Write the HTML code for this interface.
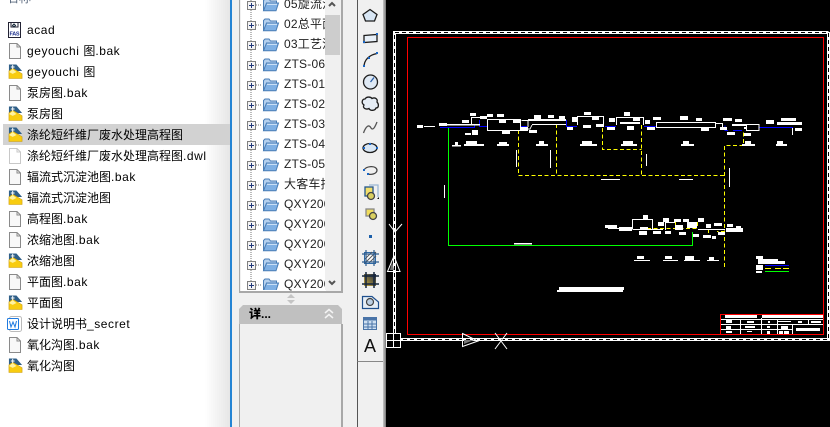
<!DOCTYPE html>
<html><head><meta charset="utf-8"><style>
html,body{margin:0;padding:0;width:830px;height:427px;overflow:hidden;background:#f0f0f0}
body{position:relative;font:12px/21px "Liberation Sans","Noto Sans CJK SC",sans-serif;color:#000}
div{position:absolute}
#list{left:0;top:0;width:230px;height:427px;background:linear-gradient(90deg,#fff 0,#fff 205px,#e6e6e6 230px)}
.r span{letter-spacing:.55px}
.r{left:27px;white-space:nowrap;height:21px}
#sel{left:3px;top:124px;width:227px;height:21px;background:#d2d2d2}
#tree{left:239px;top:-2px;width:101px;height:293px;background:#f0f0f0;border:1px solid #a8a8a8;border-top:0;border-width:0 2px 2px 1px;overflow:hidden}
#tw{left:1px;top:-1px;width:85px;height:294px;background:#fff;overflow:hidden}
.t{left:43px;white-space:nowrap;line-height:20px;height:20px;color:#222;font-size:12px;letter-spacing:.2px}
#hd{left:239px;top:305px;width:103px;height:19px;background:#c0c0c0;clip-path:polygon(4px 0,99px 0,103px 4px,103px 19px,0 19px,0 4px);font-size:12px;font-weight:bold;line-height:19px;color:#000}
#hd b{position:absolute;left:10px;top:0}
#bd{left:239px;top:324px;width:101px;height:110px;border:1px solid #a8a8a8;border-width:0 2px 0 1px;background:#f0f0f0}
#tb{left:357px;top:0;width:25px;height:361px;background:#f0f0f0;border-left:1px solid #555;border-right:1px solid #999;border-bottom:1px solid #888}
#tb2{left:357px;top:362px;width:25px;height:65px;background:#f0f0f0;border-left:1px solid #555;border-right:1px solid #999}
#cv{left:386px;top:0;width:444px;height:427px;background:#000}
svg{position:absolute;left:0;top:0}
</style></head><body>
<div id="list"></div>
<div style="left:230px;top:0;width:2px;height:427px;background:#2484d4"></div>
<div id="sel"></div>
<div style="left:7px;top:-12px;color:#55657a;line-height:21px">名称</div>
<div class="r" style="top:20px"><span>acad</span></div>
<div class="r" style="top:41px"><span>geyouchi </span>图<span>.bak</span></div>
<div class="r" style="top:62px"><span>geyouchi </span>图</div>
<div class="r" style="top:83px">泵房图<span>.bak</span></div>
<div class="r" style="top:104px">泵房图</div>
<div class="r" style="top:125px">涤纶短纤维厂废水处理高程图</div>
<div class="r" style="top:146px">涤纶短纤维厂废水处理高程图<span>.dwl</span></div>
<div class="r" style="top:167px">辐流式沉淀池图<span>.bak</span></div>
<div class="r" style="top:188px">辐流式沉淀池图</div>
<div class="r" style="top:209px">高程图<span>.bak</span></div>
<div class="r" style="top:230px">浓缩池图<span>.bak</span></div>
<div class="r" style="top:251px">浓缩池图</div>
<div class="r" style="top:272px">平面图<span>.bak</span></div>
<div class="r" style="top:293px">平面图</div>
<div class="r" style="top:314px">设计说明书<span>_secret</span></div>
<div class="r" style="top:335px">氧化沟图<span>.bak</span></div>
<div class="r" style="top:356px">氧化沟图</div>

<div id="tree"><div id="tw">
<div class="t" style="top:-3px">05旋流沉</div>
<div class="t" style="top:17px">02总平面</div>
<div class="t" style="top:37px">03工艺流</div>
<div class="t" style="top:57px">ZTS-06</div>
<div class="t" style="top:77px">ZTS-01</div>
<div class="t" style="top:97px">ZTS-02</div>
<div class="t" style="top:117px">ZTS-03</div>
<div class="t" style="top:137px">ZTS-04</div>
<div class="t" style="top:157px">ZTS-05</div>
<div class="t" style="top:177px">大客车招</div>
<div class="t" style="top:197px">QXY2000</div>
<div class="t" style="top:217px">QXY2000</div>
<div class="t" style="top:237px">QXY2000</div>
<div class="t" style="top:257px">QXY2000</div>
<div class="t" style="top:277px">QXY2000</div>
</div></div>
<div style="left:325px;top:0;width:15px;height:290px;background:#f0f0f0"></div>
<div style="left:325px;top:15px;width:15px;height:40px;background:#cdcdcd"></div>
<div id="hd"><b>详...</b></div>
<div id="bd"></div>
<div id="tb"></div><div id="tb2"></div>
<div style="left:383px;top:0;width:3px;height:427px;background:linear-gradient(90deg,#c8c8c8,#777)"></div>
<div id="cv"></div>

<svg width="830" height="427" viewBox="0 0 830 427">
<defs>
<clipPath id="tc"><rect x="240" y="0" width="85" height="290"/></clipPath>
<symbol id="doc" viewBox="0 0 16 16" overflow="visible"><path d="M2.5 .5H10L13.5 4V15.500H2.500Z" fill="#f8f8f8" stroke="#8a8a8a"/><path d="M10 .5V4H13.500" fill="none" stroke="#8a8a8a"/></symbol>
<symbol id="ldoc" viewBox="0 0 16 16" overflow="visible"><path d="M2.5 .5H10L13.5 4V15.500H2.500Z" fill="#fff" stroke="#c8c8c8"/><path d="M10 .5V4H13.500" fill="none" stroke="#c8c8c8"/></symbol>
<symbol id="dwg" viewBox="0 0 16 16" overflow="visible"><path d="M1 1H9L15 8L1 8Z" fill="#2f5f88"/><path d="M1 8L5 5L15 11V16H1Z" fill="#f8cc10" stroke="#c89a10" stroke-width=".6"/><path d="M1 9L5 6L9 9L5 11Z" fill="#fff3a0"/><path d="M5 1.500V6M3 3.700H7" stroke="#fff" stroke-width="1"/></symbol>
<symbol id="fold" viewBox="0 0 17 14" overflow="visible"><path d="M1.500 12.500V2.500L3 1H7L8.500 3H14.500V5H5L1.500 12.500Z" fill="#b4d0ee" stroke="#4a7db5"/><path d="M1.500 12.800L4.500 5H16.500L14 12.800Z" fill="#7fb0e4" stroke="#4a7db5"/><path d="M5 6.300H15" stroke="#dcebfa"/></symbol>
<symbol id="plus" viewBox="0 0 9 9" overflow="visible"><rect x=".5" y=".5" width="8" height="8" fill="#f4f4f4" stroke="#808080"/><path d="M2 4.500H7M4.500 2V7" stroke="#223a7a"/></symbol>
</defs>

<g>
<rect x="8.500" y="22.500" width="12" height="15" fill="#fff" stroke="#223" stroke-width="1"/>
<path d="M11 22V27H18V22" fill="none" stroke="#223"/>
<path d="M14 24l1.500 1.500l-1.500 1.500l-1.500-1.500z" fill="none" stroke="#123"/>
<text x="9.500" y="35.500" font-family="Liberation Sans" font-size="5.500" font-weight="bold" fill="#1c2f8c" textLength="10">FAS</text>
<use href="#doc" x="7" y="43" width="16" height="16"/>
<use href="#dwg" x="8" y="63" width="15" height="16"/>
<use href="#doc" x="7" y="85" width="16" height="16"/>
<use href="#dwg" x="8" y="105" width="15" height="16"/>
<use href="#dwg" x="8" y="126" width="15" height="16"/>
<use href="#ldoc" x="7" y="148" width="16" height="16"/>
<use href="#doc" x="7" y="169" width="16" height="16"/>
<use href="#dwg" x="8" y="189" width="15" height="16"/>
<use href="#doc" x="7" y="211" width="16" height="16"/>
<use href="#doc" x="7" y="232" width="16" height="16"/>
<use href="#dwg" x="8" y="252" width="15" height="16"/>
<use href="#doc" x="7" y="274" width="16" height="16"/>
<use href="#dwg" x="8" y="294" width="15" height="16"/>
<rect x="9.500" y="316.500" width="12" height="15" rx="2" fill="#fff" stroke="#bbb"/>
<rect x="7.500" y="318.500" width="11" height="11" rx="1" fill="#fff" stroke="#1e7ae0"/>
<path d="M9.500 321l1.500 6l2-5l2 5l1.500-6" fill="none" stroke="#1e7ae0"/>
<use href="#doc" x="7" y="337" width="16" height="16"/>
<use href="#dwg" x="8" y="357" width="15" height="16"/>
</g>

<g clip-path="url(#tc)">
<path d="M251 0V290" stroke="#777" stroke-dasharray="1 1"/>
<g stroke="#777" stroke-dasharray="1 1"><path d="M256 5H262M256 25H262M256 45H262M256 65H262M256 85H262M256 105H262M256 125H262M256 145H262M256 165H262M256 185H262M256 205H262M256 225H262M256 245H262M256 265H262M256 285H262"/></g>
<use href="#plus" x="247" y="1" width="9" height="9"/>
<use href="#plus" x="247" y="21" width="9" height="9"/>
<use href="#plus" x="247" y="41" width="9" height="9"/>
<use href="#plus" x="247" y="61" width="9" height="9"/>
<use href="#plus" x="247" y="81" width="9" height="9"/>
<use href="#plus" x="247" y="101" width="9" height="9"/>
<use href="#plus" x="247" y="121" width="9" height="9"/>
<use href="#plus" x="247" y="141" width="9" height="9"/>
<use href="#plus" x="247" y="161" width="9" height="9"/>
<use href="#plus" x="247" y="181" width="9" height="9"/>
<use href="#plus" x="247" y="201" width="9" height="9"/>
<use href="#plus" x="247" y="221" width="9" height="9"/>
<use href="#plus" x="247" y="241" width="9" height="9"/>
<use href="#plus" x="247" y="261" width="9" height="9"/>
<use href="#plus" x="247" y="281" width="9" height="9"/>
<use href="#fold" x="262" y="-2" width="17" height="14"/>
<use href="#fold" x="262" y="18" width="17" height="14"/>
<use href="#fold" x="262" y="38" width="17" height="14"/>
<use href="#fold" x="262" y="58" width="17" height="14"/>
<use href="#fold" x="262" y="78" width="17" height="14"/>
<use href="#fold" x="262" y="98" width="17" height="14"/>
<use href="#fold" x="262" y="118" width="17" height="14"/>
<use href="#fold" x="262" y="138" width="17" height="14"/>
<use href="#fold" x="262" y="158" width="17" height="14"/>
<use href="#fold" x="262" y="178" width="17" height="14"/>
<use href="#fold" x="262" y="198" width="17" height="14"/>
<use href="#fold" x="262" y="218" width="17" height="14"/>
<use href="#fold" x="262" y="238" width="17" height="14"/>
<use href="#fold" x="262" y="258" width="17" height="14"/>
<use href="#fold" x="262" y="278" width="17" height="14"/>
</g>
<path d="M329 6L332 3L335 6" fill="none" stroke="#555" stroke-width="2"/>
<path d="M329 281L332 284L335 281" fill="none" stroke="#555" stroke-width="2"/>
<path d="M287 298L291 294L295 298ZM287 300L291 304L295 300Z" fill="#c4c4c4"/>
<path d="M325 313L329 309.500L333 313M325 318L329 314.500L333 318" fill="none" stroke="#f4f4f4" stroke-width="1.500"/>
</g>

<g fill="#d8e6f4" stroke="#1c1c1c" stroke-width="1.300">
<path d="M370 9.500L377 14.500L374.500 21H365.500L363 14.500Z"/>
<path d="M364 35.500L377 34.500V41.500L364 42.500Z" fill="#e8f0f8"/>
<path d="M364 67C364 60 369 55 377 53.500" fill="none"/>
<circle cx="370.500" cy="82" r="7" fill="#dfe9f4"/>
<path d="M370.500 82L374 77.500" fill="none" stroke="#2a5fa8"/>
<path d="M365 99C367 96 371 97 372 98.500C375 97 378 99 377 102C379 104 379 108 376 108C375 111 370 111 369 108.500C366 110 362 108 364 105C361 103 362 99 365 99Z" fill="#e6edf5"/>
<path d="M363.500 133C366 126 369 124 371 128C373 131 375 127 377 122" fill="none" stroke="#555"/>
<ellipse cx="370" cy="148" rx="7" ry="4.500"/>
<path d="M364 170C366 166 376 165 377 170C377 174 371 175 368 174" fill="none" stroke="#444"/>
<rect x="365" y="187" width="8" height="9" fill="#f3df6a" stroke="#24568c"/>
<path d="M369 185H378V197" fill="none" stroke="#9bb7d4"/>
<circle cx="371" cy="196" r="3.500" fill="#d9cf60" stroke="#444"/>
<path d="M377 199h2v-2z" fill="#111" stroke="none"/>
<rect x="366" y="209" width="8" height="7" fill="#f1dd5c" stroke="#888"/>
<circle cx="373" cy="216" r="3.500" fill="#d9cf60" stroke="#444"/>
</g>
<path d="M363 41h2v2h-2zM376 33h2v2h-2zM363 65h2v2h-2zM368 57h2v2h-2zM376 52h2v2h-2zM369 143h2v2h-2zM363 147h2v2h-2zM376 147h2v2h-2zM363 169h2v2h-2zM367 173h2v2h-2z" fill="#1a66c4"/>
<g>
<rect x="369" y="235" width="3" height="3" fill="#1c5faa"/>
<rect x="364.500" y="252.500" width="11" height="11" fill="#fff" stroke="#2d6aa8"/>
<path d="M365 263L376 252M365 259L372 252M369 263L376 256" stroke="#555"/>
<path d="M362 254H379M362 262H379M366 250V266M374 250V266" stroke="#2d5a8a" stroke-width="1.200" fill="none"/>
<defs><linearGradient id="gr" x1="0" x2="1" y1="1" y2="0"><stop offset="0" stop-color="#caa93c"/><stop offset="1" stop-color="#1e2a44"/></linearGradient></defs>
<rect x="364" y="274" width="12" height="12" fill="url(#gr)"/>
<path d="M362 276H379M362 284H379M366 272V288M374 272V288" stroke="#14253c" stroke-width="1.500" fill="none"/>
<path d="M362.500 296.500H372L378.500 302V308.500H362.500Z" fill="#e6eef6" stroke="#1f4f8c" stroke-width="1.200"/>
<circle cx="370" cy="302" r="3.500" fill="#bcd0e4" stroke="#444" stroke-width="1.200"/>
<rect x="363.500" y="317.500" width="13" height="12" fill="#cfe0f2" stroke="#4a74a8"/>
<rect x="363.500" y="317.500" width="13" height="3" fill="#4a74a8"/>
<path d="M364 324H376M364 327H376M368 321V329M372 321V329" stroke="#4a74a8"/>
<text x="370" y="352" text-anchor="middle" font-family="Liberation Sans" font-size="18" fill="#111">A</text>
</g>

<g shape-rendering="crispEdges">
<path d="M407.500 37.500H823.500V334.500H407.500Z" fill="none" stroke="#f00"/>
<path d="M394.500 340V32.500H828.500M394 339.500H830M828.500 32V340" fill="none" stroke="#fff" stroke-width="3"/>
<path d="M394.500 340V32.500H828.500V339.500H394" fill="none" stroke="#000" stroke-dasharray="4 3"/>
<rect x="386.500" y="333.500" width="14" height="14" fill="#000" stroke="#fff"/>
<path d="M393.500 333V347M386 340.500H401" stroke="#fff"/>

<path d="M448.500 128V245.500H692.500V232" fill="none" stroke="#0f0"/>
<g fill="none" stroke="#ff0" stroke-dasharray="4 2.500">
<path d="M518.500 130V175.500H725"/>
<path d="M556.500 124V175"/>
<path d="M602.500 128V149.500H641.500"/>
<path d="M641.500 125V175"/>
<path d="M724.500 267V145.500H743.500V132"/>
<path d="M647 228.500H697M725 231.500H717M708.500 229V235M675.500 222V230M697.500 222V228"/>
</g>
<g fill="none" stroke="#00f">
<path d="M440 127.500H474.500V125M479.500 120V126.500H487.500V121M520 126.500H527M566.500 120V126.500H577M605 126.500H616M644 126.500H656M725 125.500V130.500H728M733 130.500H742M759 127.500H793"/>
</g>
<g fill="#fff">
<path d="M417 125h6v3h-6zM424 126h11v1h-11zM439 123h8v3h-8zM447 124h33v1.500h-33zM462 120h7v3h-7zM465 133h6v2h-6zM470 113h6v3h-6zM472 130h6v5h-6zM480 116h7v3h-7zM487 114h6v3h-6zM497 114h7v3h-7zM499 120h7v3h-7zM502 131h8v3h-8zM513 120h7v3h-7zM521 127h7v4h-7zM529 130h8v3h-8zM528 119h38v2h-38zM532 124h34v1h-34zM534 115h7v4h-7zM548 115h6v3h-6zM559 116h6v4h-6zM567 127h6v3h-6zM572 117h5v5h-5zM584 112h7v3h-7zM583 125h8v3h-8zM596 124h8v3h-8zM592 117h7v3h-7zM609 118h6v4h-6zM607 127h8v3h-8zM624 112h6v4h-6zM620 122h20v2h-20zM627 126h7v4h-7zM633 118h7v3h-7zM645 120h5v4h-5zM647 127h8v3h-8zM653 117h8v3h-8zM680 116h8v4h-8zM696 118h6v3h-6zM701 128h8v3h-8zM723 118h9v3h-9zM735 119h7v3h-7zM720 127h7v3h-7zM727 132h8v3h-8zM744 133h7v3h-7zM766 120h8v4h-8zM781 118h15v3h-15zM777 122h25v3h-25zM792 128h1v7h-1zM795 128h7v3h-7zM732 124h14v2h-14zM744 127h3v2h-3z"/>
<path d="M452 145h9v1.500h-9zM455 142h3v3h-3zM464 144h20v2h-20zM466 141h11v3h-11zM497 144h12v2h-12zM499 142h8v2h-8zM536 144h12v2h-12zM539 141h5v3h-5zM580 144h17v2h-17zM582 141h10v3h-10zM621 144h16v2h-16zM623 141h10v3h-10zM681 144h13v2h-13zM683 141h6v3h-6zM742 144h13v2h-13zM745 141h6v3h-6zM776 144h11v2h-11zM777 141h6v3h-6z"/>
<path d="M516 150h1v17h-1zM550 150h1v18h-1zM444 185h1v13h-1zM646 154h1v12h-1zM729 168h1v19h-1zM601 179h19v1h-19zM679 179h14v1h-14zM514 243h18v1.500h-18zM559 287h65v3h-65zM557 290h66v2h-66z"/>
<path d="M605 225h12v3h-12zM608 228h12v1h-12zM619 227h13v4h-13zM639 231h8v4h-8zM640 227h8v3h-8zM643 215h5v4h-5zM653 231h8v3h-8zM658 222h6v4h-6zM663 218h6v4h-6zM665 231h6v3h-6zM674 219h7v3h-7zM675 225h8v5h-8zM679 232h7v3h-7zM683 219h6v3h-6zM687 222h10v6h-10zM693 234h6v3h-6zM698 218h6v4h-6zM698 229h27v1h-27zM706 224h5v4h-5zM703 235h8v3h-8zM712 236h4v3h-4zM714 223h8v3h-8zM718 232h7v3h-7zM727 224h6v3h-6zM726 228h17v4h-17zM736 226h5v2h-5zM653 229h10v1h-10z"/>
<path d="M637 256h7v3h-7zM634 260h16v1h-16zM665 256h7v3h-7zM663 260h15v1h-15zM685 256h9v4h-9zM684 260h16v1h-16zM709 257h5v3h-5zM707 260h12v1h-12zM756 256h7v3h-7zM758 259h20v2h-20zM758 261h27v3h-27zM756 265h7v5h-7zM756 271h6v2h-6z"/>
<path d="M725 315h32v3h-32zM762 315h61v3h-61zM721 319h102v1h-102zM721 324h102v1h-102zM721 329h71v1h-71zM740 319h1v15h-1zM761 318h1v16h-1zM777 319h1v15h-1zM792 324h1v10h-1zM808 319h1v5h-1z"/>
<path d="M726 320h6v3h-6zM747 321h7v2h-7zM768 321h2v2h-2zM778 321h13v1h-13zM798 321h4v2h-4zM811 321h10v2h-10zM726 326h5v3h-5zM745 326h10v2h-10zM767 326h3v2h-3zM781 326h7v3h-7zM796 328h24v3h-24zM726 331h6v2h-6zM747 331h5v1h-5zM767 331h3v3h-3zM779 331h4v3h-4zM784 331h5v3h-5z"/>
</g>
<path d="M720.500 334.500V314.500H823.500" fill="none" stroke="#f00"/>
<path d="M765 265h24v1h-24z" fill="#00f"/>
<path d="M765 268h6v1h-6zM775 268h6v1h-6zM783 268h6v1h-6z" fill="#ff0"/>
<path d="M765 271h24v1h-24z" fill="#0f0"/>
<g fill="none" stroke="#fff">
<path d="M471.500 125V117.500H480M487.500 119.500H520.500V130.500H487.500ZM521.500 120.500H528V127M577.500 125V116.500H603.500V125M616.500 125V117.500H643.500V125M656.500 122.500H715.500V127.500H656.500ZM715.500 123.500H722.500V127.500M746.500 124.500H759V130.500H746.500ZM632.500 229V219.500H652.500V229.500H632.500M665.500 230V222.500H675"/>
<path d="M532 125L530 129H528" />
</g>
</g>
<g fill="none" stroke="#fff" stroke-width="1">
<path d="M389 224L395 232L402 224"/>
<path d="M394 256L387.500 271.500H400Z"/>
<path d="M462.500 333.500L478 341L462.500 346.500Z"/>
<path d="M495 333L507 349M507 333L495 349"/>
</g>
<path d="M392 262L390 270H394Z" fill="#777"/>
<path d="M464 340H474L464 344Z" fill="#777"/>
</svg>
</body></html>
